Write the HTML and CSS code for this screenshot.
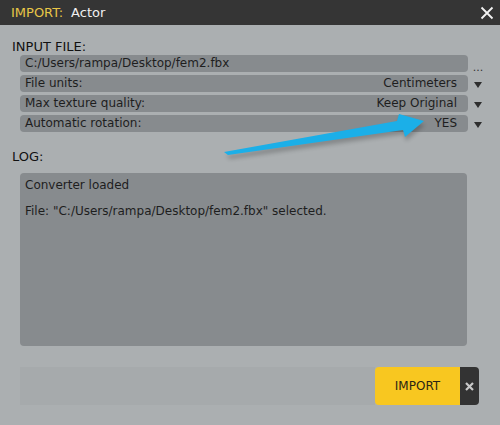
FILE: index.html
```html
<!DOCTYPE html>
<html>
<head>
<meta charset="utf-8">
<link rel="stylesheet" href="styles.css">
</head>
<body>
<div class="win">
  <header class="titlebar">
    <span class="t-key">IMPORT:</span><span class="t-val">Actor</span>
    <svg class="close" width="14" height="14" viewBox="0 0 14 14"><path d="M1.5 1.5 L12.5 12.5 M12.5 1.5 L1.5 12.5" stroke="#f2f2f2" stroke-width="1.8" fill="none"/></svg>
  </header>
  <main class="content">
    <div class="label">INPUT FILE:</div>
    <div class="rows">
      <div class="row">
        <div class="field">C:/Users/rampa/Desktop/fem2.fbx</div>
        <span class="suffix dots">...</span>
      </div>
      <div class="row">
        <div class="field"><span>File units:</span><span>Centimeters</span></div>
        <span class="suffix"><i class="tri"></i></span>
      </div>
      <div class="row">
        <div class="field"><span>Max texture quality:</span><span>Keep Original</span></div>
        <span class="suffix"><i class="tri"></i></span>
      </div>
      <div class="row">
        <div class="field"><span>Automatic rotation:</span><span>YES</span></div>
        <span class="suffix"><i class="tri"></i></span>
      </div>
    </div>
    <div class="label log-label">LOG:</div>
    <div class="log">
      <p>Converter loaded</p>
      <p>File: "C:/Users/rampa/Desktop/fem2.fbx" selected.</p>
    </div>
    <div class="footer">
      <div class="progress"></div>
      <button class="import">IMPORT</button>
      <button class="cancel"><svg width="9" height="9" viewBox="0 0 9 9"><path d="M1 1 L8 8 M8 1 L1 8" stroke="#c9c9c9" stroke-width="2.2"/></svg></button>
    </div>
  </main>
  <svg class="arrow" width="500" height="425" viewBox="0 0 500 425">
    <defs>
      <filter id="sh" x="-10%" y="-50%" width="120%" height="200%">
        <feGaussianBlur stdDeviation="2"/>
      </filter>
    </defs>
    <polygon points="225,154 397,123 399,116 424,123 405,139 403,132 229,157" fill="#000" opacity="0.22" filter="url(#sh)" transform="translate(1,2)"/>
    <polygon points="224,152 397,121 399,114 424,121 405,137 403,130 228,155" fill="#1bafe8"/>
  </svg>
</div>
</body>
</html>
```
FILE: styles.css
```css
* { box-sizing: border-box; }
html, body { margin: 0; padding: 0; }
body {
  width: 500px;
  height: 425px;
  overflow: hidden;
  background: #abafb1;
  font-family: "DejaVu Sans", Verdana, sans-serif;
  font-size: 12px;
  color: #1e1e1e;
}
.win {
  position: relative;
  width: 500px;
  height: 425px;
  background: #abafb1;
}
.titlebar {
  height: 25px;
  background: #353535;
  display: flex;
  align-items: center;
  padding: 0 0 0 11px;
  font-size: 13px;
}
.t-key { color: #e8c647; margin-right: 8px; }
.t-val { color: #f0f0f0; }
.close { margin-left: auto; margin-right: 6px; }
.content {
  padding: 14px 0 0 12px;
}
.label {
  font-size: 13px;
  line-height: 15px;
  color: #111;
}
.rows {
  display: flex;
  flex-direction: column;
  gap: 3px;
  margin-top: 1px;
  padding-left: 8px;
}
.row {
  display: flex;
  align-items: center;
  height: 17px;
}
.field {
  width: 448px;
  height: 17px;
  background: #878b8e;
  border-radius: 4px;
  display: flex;
  justify-content: space-between;
  align-items: center;
  padding: 0 11px 0 5px;
  line-height: 17px;
  white-space: nowrap;
}
.suffix {
  width: 20px;
  display: flex;
  justify-content: center;
  align-items: center;
}
.dots { color: #333; font-size: 11px; padding-top: 7px; }
.tri {
  width: 0; height: 0;
  border-left: 4.5px solid transparent;
  border-right: 4.5px solid transparent;
  border-top: 6px solid #2e2e2e;
  margin-top: 2px;
}
.log-label { margin-top: 17px; }
.log {
  margin: 9px 0 0 8px;
  width: 447px;
  height: 173px;
  background: #878b8e;
  border-radius: 4px;
  padding: 5px 5px;
}
.log p { margin: 0 0 12px; line-height: 14px; }
.footer {
  display: flex;
  margin: 21px 0 0 8px;
  width: 459px;
  height: 38px;
}
.progress {
  flex: 1;
  background: #a6aaac;
}
.import {
  width: 85px;
  border: none;
  background: #f8c720;
  border-radius: 4px 0 0 4px;
  font-family: "DejaVu Sans", Verdana, sans-serif;
  font-size: 12px;
  color: #2a2414;
  padding: 0;
}
.cancel {
  width: 19px;
  border: none;
  background: #333333;
  border-radius: 0 4px 4px 0;
  padding: 0;
  display: flex;
  align-items: center;
  justify-content: center;
}
.arrow {
  position: absolute;
  left: 0;
  top: 0;
  pointer-events: none;
}
```
